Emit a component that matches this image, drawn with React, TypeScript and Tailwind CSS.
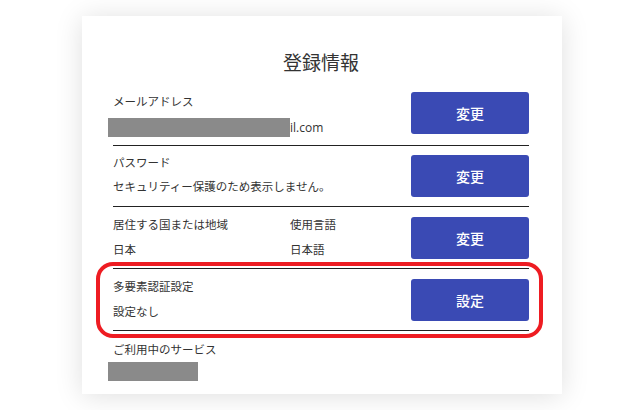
import React from "react";

const font = { fontFamily: '"Noto Sans CJK JP", "Noto Sans", sans-serif' };

function ActionButton({ label }: { label: string }) {
  return (
    <button className="h-[42px] w-[118px] shrink-0 rounded-[3px] bg-[#3a4ab4] text-[14px] font-medium text-white">
      {label}
    </button>
  );
}

export default function App() {
  return (
    <div className="min-h-[410px] w-[643px] bg-white pt-[16px]" style={font}>
      <div className="relative ml-[82px] w-[480px] bg-white pb-[13px] pl-[31px] pr-[33px] pt-[33px] text-[#333] shadow-[0_2px_26px_rgba(0,0,0,0.13)]">
        {/* Title */}
        <h1 className="text-center text-[19px] font-normal leading-[26px] text-[#333]">登録情報</h1>

        {/* Mail address */}
        <div className="mt-[17px] flex h-[53px] items-start justify-between">
          <div className="mt-[1px] flex flex-col text-[11.5px]">
            <span className="leading-[16px]">メールアドレス</span>
            <div className="mt-[9px] flex h-[19px] items-center">
              <span className="-ml-[5px] h-[19px] w-[182px] bg-[#8a8a8a]" />
              <span className="text-[12px]" style={{ fontFamily: '"Open Sans", sans-serif' }}>il.com</span>
            </div>
          </div>
          <ActionButton label="変更" />
        </div>

        {/* Password */}
        <div className="flex h-[61px] items-start justify-between border-t border-[#222] pt-[9px]">
          <div className="-mt-[1px] flex flex-col gap-[8px] text-[11.5px] leading-[16px]">
            <span>パスワード</span>
            <span>セキュリティー保護のため表示しません。</span>
          </div>
          <ActionButton label="変更" />
        </div>

        {/* Country / Language */}
        <div className="flex h-[62px] items-start justify-between border-t border-[#222] pt-[10px]">
          <div className="-mt-[1px] flex text-[11.5px] leading-[16px]">
            <div className="flex w-[177px] flex-col gap-[9px]">
              <span>居住する国または地域</span>
              <span>日本</span>
            </div>
            <div className="flex flex-col gap-[9px]">
              <span>使用言語</span>
              <span>日本語</span>
            </div>
          </div>
          <ActionButton label="変更" />
        </div>

        {/* MFA */}
        <div className="flex h-[62px] items-start justify-between border-t border-[#222] pt-[10px]">
          <div className="-mt-[1px] flex flex-col gap-[9px] text-[11.5px] leading-[16px]">
            <span>多要素認証設定</span>
            <span>設定なし</span>
          </div>
          <ActionButton label="設定" />
        </div>

        {/* Services */}
        <div className="border-t border-[#222] pt-[10px]">
          <div className="text-[11.5px] leading-[16px]">ご利用中のサービス</div>
          <div className="-ml-[5px] mt-[5px] h-[19px] w-[90px] bg-[#8a8a8a]" />
        </div>

        {/* Annotation highlight */}
        <div className="pointer-events-none absolute left-[14px] top-[246px] h-[76px] w-[447px] rounded-[17px] border-[4px] border-[#ee1c22]" />
      </div>
    </div>
  );
}
